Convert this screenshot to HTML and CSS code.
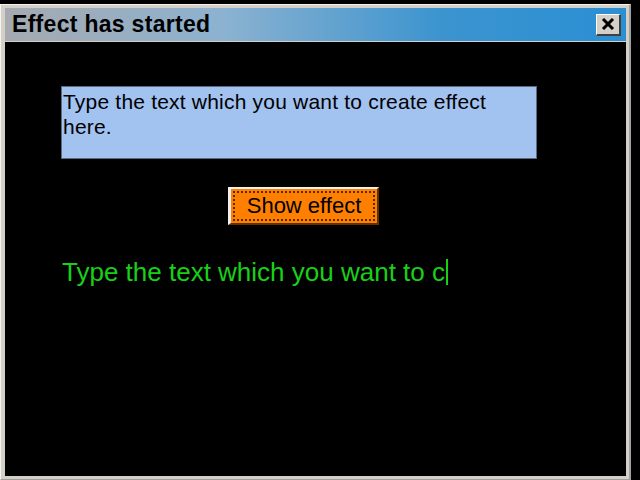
FILE: index.html
```html
<!DOCTYPE html>
<html>
<head>
<meta charset="utf-8">
<link rel="stylesheet" href="styles.css">
</head>
<body>
<div class="window">
  <div class="titlebar">
    <span class="title">Effect has started</span>
    <span class="close">
      <svg width="14" height="12" viewBox="0 0 14 12"><path d="M2 1 L12 11 M12 1 L2 11" stroke="#000" stroke-width="3"/></svg>
    </span>
  </div>
  <div class="content">
    <div class="input">Type the text which you want to create effect here.</div>
    <div class="btnrow"><button class="btn"><span class="focus">Show effect</span></button></div>
    <div class="output">Type the text which you want to c<span class="caret"></span></div>
  </div>
</div>
</body>
</html>
```
FILE: styles.css
```css
html, body {
  margin: 0;
  padding: 0;
  background: #000;
  width: 640px;
  height: 480px;
  overflow: hidden;
  font-family: "Liberation Sans", Arial, sans-serif;
}
.window {
  margin-top: 4px;
  width: 621px;
  height: 468px;
  background: #d4d0c8;
  border-top: 1px solid #f4f4f4;
  border-left: 1px solid #f4f4f4;
  border-right: 2px solid #a0a0a0;
  border-bottom: 1px solid #a0a0a0;
  padding: 3px 3px 3px 4px;
  box-sizing: content-box;
  display: flex;
  flex-direction: column;
}
.titlebar {
  height: 33px;
  background: linear-gradient(to right, #a6aab0 0%, #8cb2d0 35%, #3c94cf 70%, #2a8fd3 100%);
  display: flex;
  align-items: center;
  justify-content: space-between;
  padding: 0 5px 0 7px;
  flex: none;
}
.title {
  font-weight: bold;
  font-size: 23px;
  color: #000;
  letter-spacing: 0.3px;
}
.close {
  width: 22px;
  height: 19px;
  background: #d4d0c8;
  border-top: 1px solid #fff;
  border-left: 1px solid #fff;
  border-right: 2px solid #404040;
  border-bottom: 2px solid #404040;
  display: flex;
  align-items: center;
  justify-content: center;
}
.content {
  flex: 1;
  background: #000;
  margin-top: 1px;
  padding: 44px 0 0 56px;
}
.input {
  width: 441px;
  height: 69px;
  background: #a2c2f0;
  border: 1px solid #5a6a80;
  color: #000;
  font-size: 21px;
  line-height: 25px;
  letter-spacing: 0.2px;
  padding: 2px 32px 0 1px;
}
.btnrow {
  display: flex;
  padding-left: 167px;
  margin-top: 28px;
}
.btn {
  width: 151px;
  height: 38px;
  background: #ff8000;
  border-top: 2px solid #f0f0f0;
  border-left: 3px solid #f0f0f0;
  border-right: 2px solid #603000;
  border-bottom: 2px solid #603000;
  padding: 2px;
  font-family: inherit;
  font-size: 22px;
  color: #000;
  display: flex;
}
.focus {
  flex: 1;
  border: 2px dotted #5a2a00;
  display: flex;
  align-items: center;
  justify-content: center;
  line-height: 24px;
}
.output {
  margin-top: 31px;
  margin-left: 1px;
  color: #18d018;
  font-size: 26px;
  line-height: 32px;
  display: flex;
  align-items: center;
}
.caret {
  display: inline-block;
  width: 2px;
  height: 26px;
  background: #18d018;
  margin-left: 1px;
}
```
